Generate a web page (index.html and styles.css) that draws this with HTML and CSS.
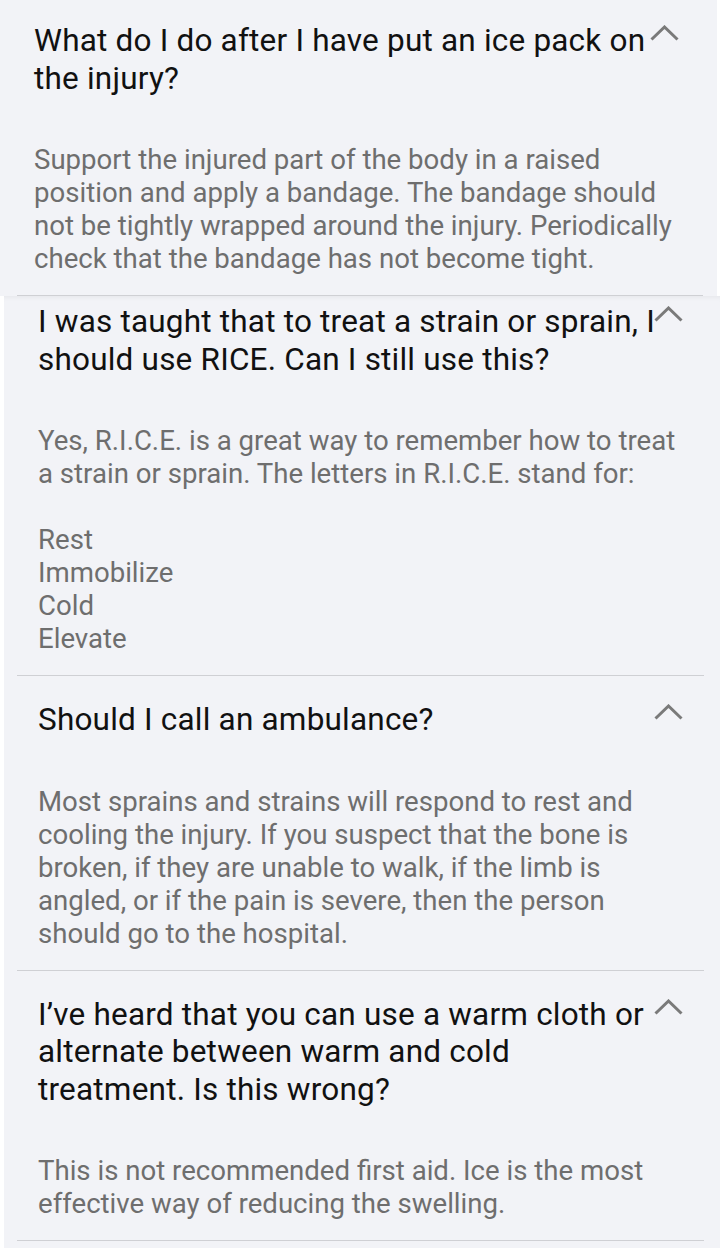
FILE: index.html
```html
<!DOCTYPE html>
<html lang="en">
<head>
<meta charset="utf-8">
<title>FAQ</title>
<link rel="stylesheet" href="styles.css">
</head>
<body>
<div class="page">
  <section class="panel panel-first">
    <div class="item item-first">
      <div class="q-row">
        <h2 class="question">What do I do after I have put an ice pack on the injury?</h2>
        <svg class="chev" width="29" height="16" viewBox="0 0 29 16"><polyline points="1.5,14.5 14.5,2 27.5,14.5" /></svg>
      </div>
      <p class="answer">Support the injured part of the body in a raised position and apply a bandage. The bandage should not be tightly wrapped around the injury. Periodically check that the bandage has not become tight.</p>
    </div>
  </section>
  <section class="panel panel-second">
    <div class="item item-cut">
      <div class="q-row">
        <h2 class="question">I was taught that to treat a strain or sprain, I should use RICE. Can I still use this?</h2>
        <svg class="chev" width="29" height="16" viewBox="0 0 29 16"><polyline points="1.5,14.5 14.5,2 27.5,14.5" /></svg>
      </div>
      <p class="answer">Yes, R.I.C.E. is a great way to remember how to treat a strain or sprain. The letters in R.I.C.E. stand for:<br><br>Rest<br>Immobilize<br>Cold<br>Elevate</p>
    </div>
    <div class="item">
      <div class="q-row">
        <h2 class="question">Should I call an ambulance?</h2>
        <svg class="chev" width="29" height="16" viewBox="0 0 29 16"><polyline points="1.5,14.5 14.5,2 27.5,14.5" /></svg>
      </div>
      <p class="answer">Most sprains and strains will respond to rest and cooling the injury. If you suspect that the bone is broken, if they are unable to walk, if the limb is angled, or if the pain is severe, then the person should go to the hospital.</p>
    </div>
    <div class="item">
      <div class="q-row">
        <h2 class="question">I’ve heard that you can use a warm cloth or alternate between warm and cold treatment. Is this wrong?</h2>
        <svg class="chev" width="29" height="16" viewBox="0 0 29 16"><polyline points="1.5,14.5 14.5,2 27.5,14.5" /></svg>
      </div>
      <p class="answer">This is not recommended first aid. Ice is the most effective way of reducing the swelling.</p>
    </div>
  </section>
</div>
</body>
</html>
```
FILE: styles.css
```css
html, body {
  margin: 0;
  padding: 0;
  background: #ffffff;
}
body {
  font-family: Roboto, "Liberation Sans", Arial, sans-serif;
  width: 720px;
  height: 1248px;
  overflow: hidden;
}
.page {
  display: flex;
  flex-direction: column;
  height: 1248px;
}
.panel {
  background: #f2f3f7;
  display: flex;
  flex-direction: column;
}
.panel-first {
  width: 717px;
  flex: none;
}
.panel-second {
  width: 716px;
  margin-left: 4px;
  flex: 1;
  box-shadow: inset 0 6px 6px -6px rgba(0,0,0,0.08);
}
.item {
  padding: 25px 0 0 0;
  display: flex;
  flex-direction: column;
}
.item-first {
  padding-top: 22px;
}
.item-cut {
  padding-top: 7px;
}
.item::after {
  content: "";
  display: block;
  height: 1px;
  background: #cfd0d4;
  margin: 20px 16px 0 13px;
}
.panel-first .item::after {
  margin: 20px 14px 0 17px;
}
.q-row {
  display: flex;
  align-items: flex-start;
  padding-left: 34px;
}
.question {
  margin: 0 -8px 0 0;
  width: 624px;
  font-size: 31.5px;
  letter-spacing: 0.2px;
  font-weight: 400;
  line-height: 37.5px;
  color: #111111;
}
.chev {
  flex: none;
  margin-top: 3px;
  fill: none;
  stroke: #7a7a7a;
  stroke-width: 3;
}
.answer {
  margin: 46px 0 0 0;
  padding: 0 30px 0 34px;
  font-size: 27.6px;
  line-height: 33px;
  color: #6e6e6e;
}
```
